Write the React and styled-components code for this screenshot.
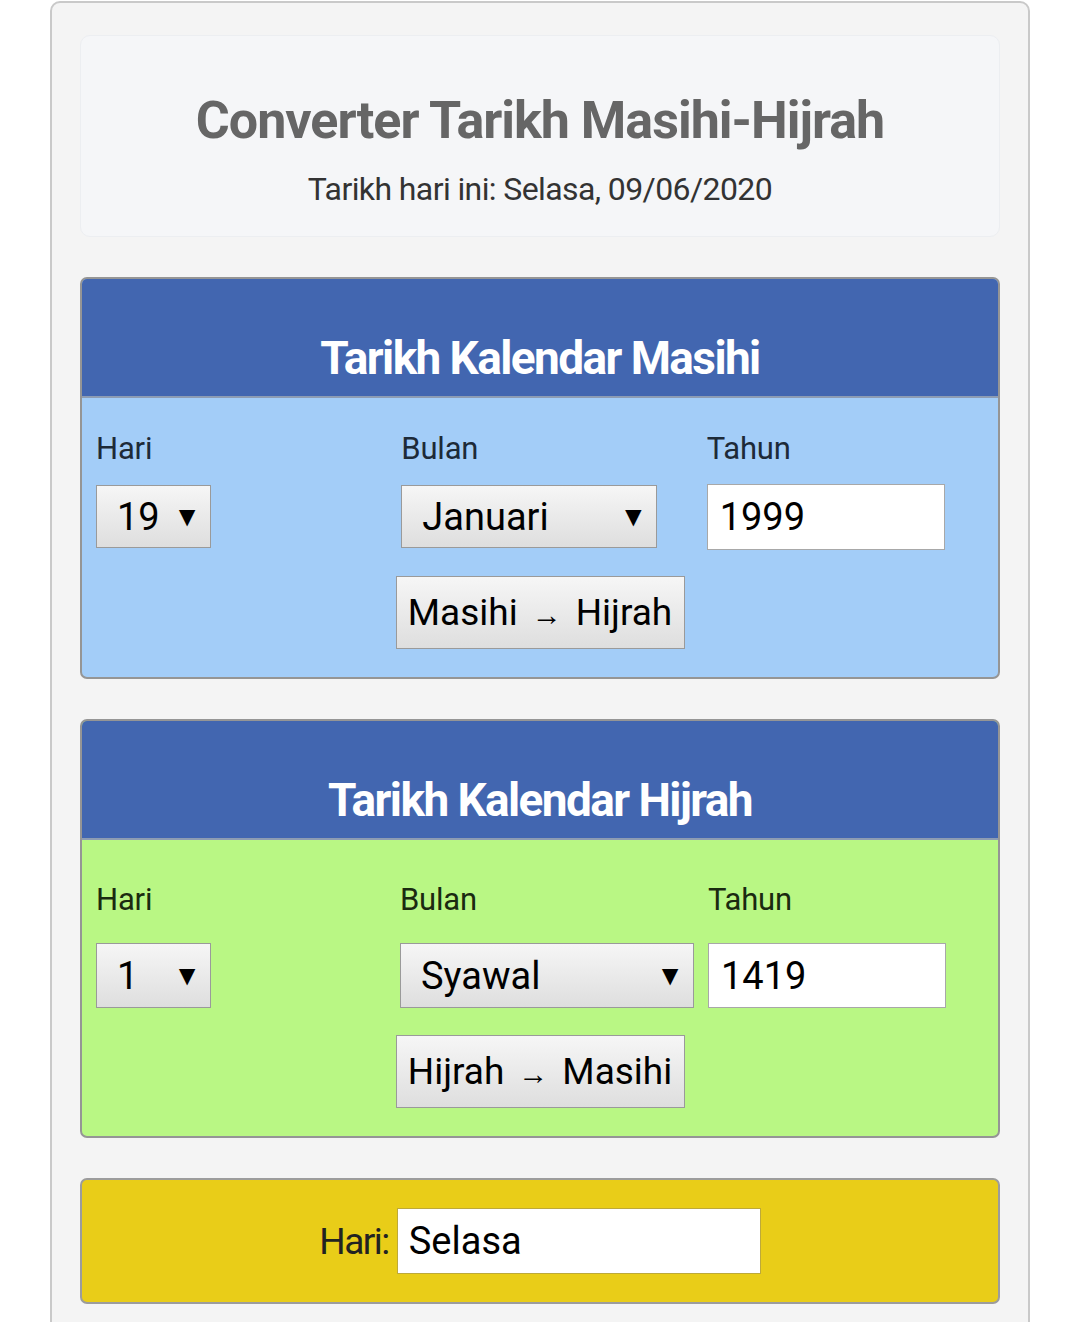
import React from 'react'
import styled, {createGlobalStyle} from 'styled-components'

const Global = createGlobalStyle`
  body {
    margin: 0;
    background: #fff;
    font-family: Roboto, 'Liberation Sans', sans-serif;
  }
`

const Wrapper = styled.div`
  width: 980px;
  box-sizing: border-box;
  margin: 1px auto 0;
  padding: 32px 28px 40px;
  background: #f4f4f4;
  border: 2px solid #c9c9c9;
  border-radius: 10px;
  display: flex;
  flex-direction: column;
  gap: 40px;
`

const Header = styled.header`
  background: #f5f6f8;
  border: 1px solid #eceef1;
  border-radius: 10px;
  height: 202px;
  box-sizing: border-box;
  display: flex;
  flex-direction: column;
  align-items: center;
  padding-top: 55px;
`

const Title = styled.h1`
  margin: 0;
  font-size: 52px;
  line-height: 60px;
  font-weight: 700;
  letter-spacing: -1px;
  color: #666;
`

const Subtitle = styled.p`
  margin: 19px 0 0;
  font-size: 32px;
  line-height: 38px;
  letter-spacing: -0.6px;
  color: #333;
`

const Panel = styled.section`
  border: 2px solid #959595;
  border-radius: 7px;
  overflow: hidden;
  background: ${p => p.bg};
`

const PanelHead = styled.div`
  background: #4266b0;
  border-bottom: 2px solid #8d9cb3;
  height: 119px;
  box-sizing: border-box;
  display: flex;
  align-items: flex-end;
  justify-content: center;
  padding-bottom: 12px;
`

const PanelTitle = styled.h2`
  margin: 0;
  color: #fff;
  font-size: 46px;
  line-height: 52px;
  font-weight: 700;
  letter-spacing: -1.6px;
`

const Grid = styled.div`
  display: grid;
  grid-template-columns: repeat(3, 1fr);
  padding-top: ${p => p.pt}px;
`

const Col = styled.div`
  padding: 0 0 0 14px;
  display: flex;
  flex-direction: column;
  gap: ${p => p.gap}px;
`

const Label = styled.label`
  font-size: 31px;
  line-height: 36px;
  letter-spacing: -0.2px;
  color: ${p => p.color};
`

const Select = styled.div`
  width: ${p => p.w}px;
  height: ${p => p.h}px;
  box-sizing: border-box;
  border: 1px solid #9a9a9a;
  background: linear-gradient(#f6f6f6, #dedede);
  display: flex;
  align-items: center;
  justify-content: space-between;
  padding: 0 9px 0 20px;
  font-size: 38px;
  color: #000;
`

const Arrow = styled.span`
  font-size: 28px;
`

const TextInput = styled.input`
  width: 238px;
  height: ${p => p.h || 66}px;
  box-sizing: border-box;
  border: 1px solid #a8a8a8;
  background: #fff;
  padding: 0 12px;
  font-family: Roboto, 'Liberation Sans', sans-serif;
  font-size: 38px;
  color: #000;
  outline: none;
  margin-top: ${p => p.mt || 0}px;
`

const Actions = styled.div`
  display: flex;
  justify-content: center;
  padding: ${p => p.pt}px 0 ${p => p.pb}px;
`

const Button = styled.button`
  width: 289px;
  height: 73px;
  box-sizing: border-box;
  border: 1px solid #9a9a9a;
  background: linear-gradient(#f6f6f6, #dedede);
  font-family: Roboto, 'Liberation Sans', sans-serif;
  font-size: 37px;
  color: #000;
  padding: 0;
  white-space: nowrap;
`

const SmallArrow = styled.span`
  font-size: 30px;
  margin: 0 14px;
`

const Result = styled.section`
  background: #e9cd18;
  border: 2px solid #9c9c9c;
  border-radius: 7px;
  height: 126px;
  box-sizing: border-box;
  display: flex;
  align-items: center;
  justify-content: center;
  gap: 8px;
`

const ResultLabel = styled.span`
  font-size: 37px;
  letter-spacing: -1.5px;
  color: #222;
`

const ResultInput = styled(TextInput)`
  width: 364px;
  padding: 0 11px;
  border-color: #bda93a;
`

const Converter = ({bg, labelColor, title, day, month, monthWidth, year, from, to, padTop, gap, fieldH, inputH, inputTop, actionTop, actionBottom}) => (
  <Panel bg={bg}>
    <PanelHead>
      <PanelTitle>{title}</PanelTitle>
    </PanelHead>
    <Grid pt={padTop}>
      <Col gap={gap}>
        <Label color={labelColor}>Hari</Label>
        <Select w={115} h={fieldH}>
          <span>{day}</span>
          <Arrow>▼</Arrow>
        </Select>
      </Col>
      <Col gap={gap}>
        <Label color={labelColor}>Bulan</Label>
        <Select w={monthWidth} h={fieldH}>
          <span>{month}</span>
          <Arrow>▼</Arrow>
        </Select>
      </Col>
      <Col gap={gap}>
        <Label color={labelColor}>Tahun</Label>
        <TextInput defaultValue={year} mt={inputTop} h={inputH} />
      </Col>
    </Grid>
    <Actions pt={actionTop} pb={actionBottom}>
      <Button>
        {from}
        <SmallArrow>→</SmallArrow>
        {to}
      </Button>
    </Actions>
  </Panel>
)

const App = () => (
  <>
    <Global />
    <Wrapper>
      <Header>
        <Title>Converter Tarikh Masihi-Hijrah</Title>
        <Subtitle>Tarikh hari ini: Selasa, 09/06/2020</Subtitle>
      </Header>
      <Converter
        bg="#a3cdf8"
        labelColor="#1d2a38"
        title="Tarikh Kalendar Masihi"
        day="19"
        month="Januari"
        monthWidth={256}
        year="1999"
        from="Masihi"
        to="Hijrah"
        padTop={33}
        gap={18}
        fieldH={63}
        inputH={66}
        inputTop={-1}
        actionTop={26}
        actionBottom={28}
      />
      <Converter
        bg="#b9f784"
        labelColor="#1a2a10"
        title="Tarikh Kalendar Hijrah"
        day="1"
        month="Syawal"
        monthWidth={294}
        year="1419"
        from="Hijrah"
        to="Masihi"
        padTop={42}
        gap={25}
        fieldH={65}
        inputH={65}
        inputTop={0}
        actionTop={27}
        actionBottom={28}
      />
      <Result>
        <ResultLabel>Hari:</ResultLabel>
        <ResultInput defaultValue="Selasa" />
      </Result>
    </Wrapper>
  </>
)

export default App
